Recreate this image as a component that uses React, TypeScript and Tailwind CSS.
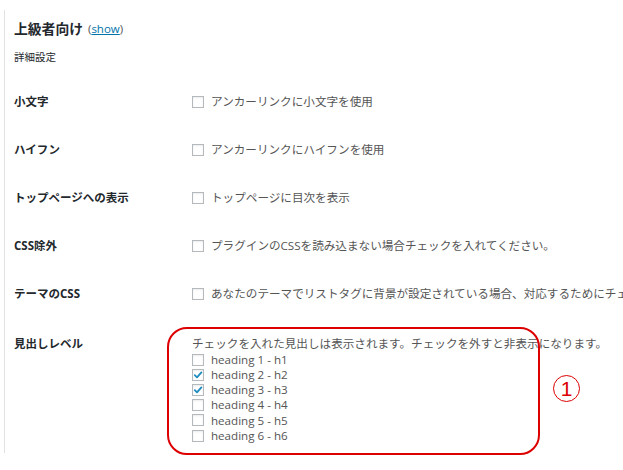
import React from "react";

const jp = { fontFamily: '"Open Sans", "Noto Sans CJK JP", sans-serif' };

function Box({ checked = false }: { checked?: boolean }) {
  return (
    <span className="inline-flex w-[12px] h-[12px] border border-[#b4b9be] bg-white items-center justify-center shrink-0 shadow-[inset_0_1px_2px_rgba(0,0,0,0.08)]">
      {checked && (
        <svg width="10" height="10" viewBox="0 0 10 10">
          <path d="M1.8 5.2 L4 7.4 L8.4 2.4" fill="none" stroke="#1e8cbe" strokeWidth="1.8" strokeLinecap="round" strokeLinejoin="round" />
        </svg>
      )}
    </span>
  );
}

function Row({ label, text }: { label: string; text: string }) {
  return (
    <div className="h-[48px] flex items-center">
      <div className="w-[178px] shrink-0 text-[11.5px] font-bold text-[#23282d]">{label}</div>
      <div className="flex items-center gap-[7px] text-[11.6px] text-[#555] whitespace-nowrap">
        <Box />
        <span>{text}</span>
      </div>
    </div>
  );
}

export default function App() {
  const headings = [false, true, true, false, false, false];
  return (
    <div className="relative w-[623px] h-[470px] bg-white overflow-hidden" style={jp}>
      <div className="ml-[4px] mt-[10px] h-[443px] border-l border-[#e2e2e2] pl-[9px]">
        <div className="h-[38px] flex items-center gap-[5px] leading-[20px]">
          <span className="text-[13.8px] font-bold text-[#23282d]">上級者向け</span>
          <span className="text-[11.5px] text-[#555]">
            (<span className="text-[#0073aa] underline">show</span>)
          </span>
        </div>
        <div className="h-[20px] mb-[10px] flex items-center text-[10.5px] text-[#23282d]">詳細設定</div>
        <Row label="小文字" text="アンカーリンクに小文字を使用" />
        <Row label="ハイフン" text="アンカーリンクにハイフンを使用" />
        <Row label="トップページへの表示" text="トップページに目次を表示" />
        <Row label="CSS除外" text="プラグインのCSSを読み込まない場合チェックを入れてください。" />
        <Row label="テーマのCSS" text="あなたのテーマでリストタグに背景が設定されている場合、対応するためにチェックを入れてください。" />
        <div className="flex pt-[17px]">
          <div className="w-[178px] shrink-0 text-[11.5px] font-bold text-[#23282d] leading-[17px]">見出しレベル</div>
          <div className="text-[11.6px] text-[#555] whitespace-nowrap">
            <div className="leading-[17px]">チェックを入れた見出しは表示されます。チェックを外すと非表示になります。</div>
            {headings.map((c, i) => (
              <div key={i} className="flex items-center gap-[7px] h-[15.2px]">
                <Box checked={c} />
                <span>heading {i + 1} - h{i + 1}</span>
              </div>
            ))}
          </div>
        </div>
      </div>
      <div className="absolute left-[167px] top-[327px] w-[373px] h-[128px] border-2 border-[#dd0000] rounded-[20px] pointer-events-none" />
      <div className="absolute left-[553px] top-[375px] w-[27px] h-[27px] rounded-full border-[1.5px] border-[#dd0000] flex items-center justify-center text-[#dd0000] text-[21px] leading-none" style={{ fontFamily: '"Liberation Sans", sans-serif' }}>
        1
      </div>
    </div>
  );
}
